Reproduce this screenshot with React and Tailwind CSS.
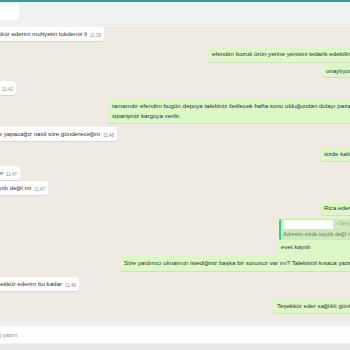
import React from "react";

const font = "font-['Liberation_Sans',Arial,sans-serif]";

function In({ right, text, time, mt }) {
  return (
    <div className={`flex justify-end shrink-0 ${right} ${mt}`}>
      <div className="flex items-end whitespace-nowrap bg-white rounded-[3px] pl-[4px] pr-[3px] py-[2px] h-[14px] shadow-[0_1px_0.5px_rgba(0,0,0,0.08)]">
        <span className="text-[6.2px] leading-[10px] text-[#303030]">{text}</span>
        <span className="text-[4.5px] leading-[7px] text-[#8c8c8c] ml-[3px]">{time}</span>
      </div>
    </div>
  );
}

function Out({ left, mt, children, h = "h-[14px]" }) {
  return (
    <div className={`flex justify-start shrink-0 ${left} ${mt}`}>
      <div className={`whitespace-nowrap bg-[#dcf8c6] rounded-[3px] pl-[4px] pr-[30px] py-[2px] ${h} text-[6.2px] leading-[10px] text-[#303030] shadow-[0_1px_0.5px_rgba(0,0,0,0.08)]`}>
        {children}
      </div>
    </div>
  );
}

export default function App() {
  return (
    <div className={`w-[350px] h-[350px] overflow-hidden flex flex-col bg-[#efeae2] ${font}`}>
      <div className="h-[2px] bg-[#3d9d92] shrink-0" />
      <div className="h-[25px] shrink-0 bg-[#f1f1f2] flex items-start">
        <div className="mt-[1px] w-[19px] h-[17px] bg-white rounded-r-[3px]" />
      </div>
      <div className="flex-1 flex flex-col overflow-hidden">
        <In right="w-[104px]" mt="mt-[0px]" text="Teşekkür ederim muhyetin tokdemir li" time="11:39" />
        <Out left="pl-[208px]" mt="mt-[6px]" h="h-[15px]">efendim bozuk ürün yerine yenisini tedarik edebiliriz</Out>
        <Out left="pl-[322px]" mt="mt-[2px]" h="h-[13px]">onaylıyor musunuz</Out>
        <In right="w-[16px]" mt="mt-[4px]" text="evet" time="11:42" />
        <Out left="pl-[108px]" mt="mt-[4px]" h="h-[24px]">
          <div>tamamdır efendim bugün depoya talebiniz iletilecek hafta sonu olduğundan dolayı pazartesi günü</div>
          <div>siparişiniz kargoya verilir.</div>
        </Out>
        <In right="w-[117px]" mt="mt-[4px]" text="Peki ne yapacağız nasil size göndereceğim" time="11:48" />
        <Out left="pl-[320px]" mt="mt-[6px]">sizde kalsın</Out>
        <In right="w-[20px]" mt="mt-[5px]" text="Teşekkürler" time="11:47" />
        <In right="w-[48px]" mt="mt-[1px]" text="Adresim kayıtlı değil mi" time="11:47" />
        <Out left="pl-[320px]" mt="mt-[6px]">Rica ederim</Out>
        <div className="flex justify-start shrink-0 pl-[277px] mt-[2px]">
          <div className="whitespace-nowrap bg-[#dcf8c6] rounded-[3px] p-[2px] pb-[2px] w-[120px] shadow-[0_1px_0.5px_rgba(0,0,0,0.08)]">
            <div className="flex bg-[#cfe9bb] rounded-[2px] overflow-hidden h-[21px]">
              <div className="w-[2px] bg-[#35cd96] shrink-0" />
              <div className="flex flex-col pl-[2px]">
                <div className="flex items-center h-[10px]">
                  <div className="w-[50px] h-[9px] bg-white" />
                  <span className="ml-[3px] text-[5px] text-[#9aa89a]">~Seyyid</span>
                </div>
                <div className="text-[5.5px] leading-[10px] text-[#66786a]">Adresim sizde kayıtlı değil mi</div>
              </div>
            </div>
            <div className="text-[6.2px] leading-[14px] text-[#303030] pl-[2px]">evet kayıtlı</div>
          </div>
        </div>
        <Out left="pl-[120px]" mt="mt-[0px]" h="h-[15px]">Size yardımcı olmamızı istediğiniz başka bir sorunuz var mı? Talebinizi kısaca yazabilir misiniz?</Out>
        <In right="w-[79px]" mt="mt-[6px]" text="Teşekkür ederim bu kadar" time="11:48" />
        <Out left="pl-[273px]" mt="mt-[8px]">Teşekkür eder sağlıklı günler dileriz.</Out>
      </div>
      <div className="h-[29px] shrink-0 bg-[#f0f0f2] flex flex-col">
        <div className="mt-[6px] h-[16px] bg-white flex items-center">
          <div className="flex justify-end w-[17px] shrink-0">
            <span className="whitespace-nowrap text-[6px] text-[#8a8a8a]">Bir mesaj yazın</span>
          </div>
        </div>
        <div className="flex-1 mt-[1px] bg-[#e7e7e9]" />
      </div>
    </div>
  );
}
